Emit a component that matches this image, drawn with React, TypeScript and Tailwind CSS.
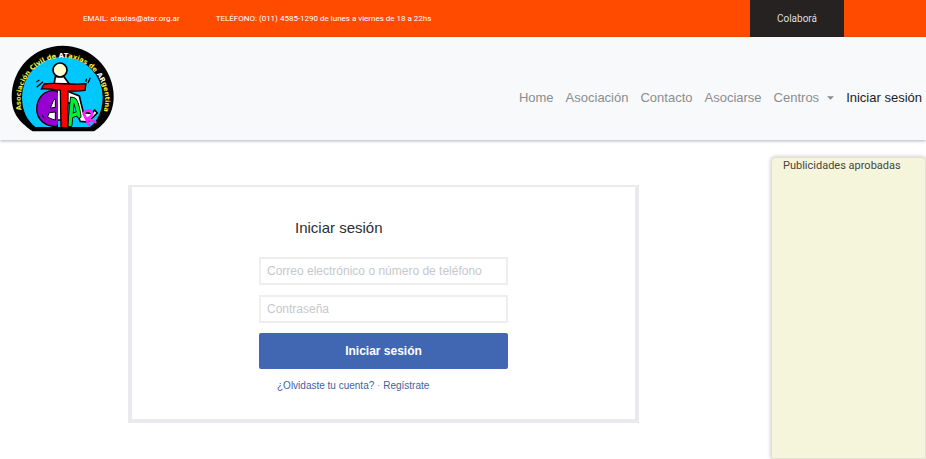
import React from "react";

const links = ["Home", "Asociación", "Contacto", "Asociarse"];

function Logo() {
  return (
    <svg
      viewBox="33 27 312 261"
      className="h-[87px] w-[104px]"
      role="img"
      aria-label="Asociación Civil de Ataxias de Argentina"
    >
      <defs>
        <path id="rim" d="M65 222 A127 127 0 1 1 312 222" />
      </defs>
      <path
        d="M98 286 C66 262 35 240 35 182 A153 153 0 0 1 341 182 C341 240 308 268 282 286 Z"
        fill="#000"
      />
      <path
        d="M106 273 C82 254 66 226 66 184 A121 121 0 0 1 308 184 C308 226 290 258 270 273 Z"
        fill="#00c8ff"
      />
      <text
        fill="#f8f03a"
        fontFamily="'DejaVu Sans', sans-serif"
        fontWeight="700"
        fontSize="20"
      >
        <textPath href="#rim">
          Asociación Civil de <tspan fill="#fff">AT</tspan>axias de{" "}
          <tspan fill="#fff">AR</tspan>gentina
        </textPath>
      </text>
      <path
        d="M109 138 l9 -6 M110 154 l19 -17 M257 137 l3 -9 M264 141 l7 -16"
        stroke="#000"
        strokeWidth="4"
        fill="none"
      />
      <g stroke="#000" strokeWidth="5" strokeLinejoin="round">
        <path
          d="M166 122 L192 122 L206 142 L208 168 L238 180 L250 230 L276 232 L284 222 L292 231 L264 258 L240 256 L226 206 L202 200 L202 252 L160 252 L158 170 Z"
          fill="#fff"
        />
        <ellipse cx="180" cy="102" rx="21" ry="21" fill="#ffffd2" />
      </g>
      <path
        d="M172 165 C130 158 110 190 110 220 C111 252 136 272 172 272 L172 226 L147 229 L142 250 L128 240 C136 212 146 190 172 180 Z"
        fill="#9600d2"
        stroke="#000"
        strokeWidth="4"
        strokeLinejoin="round"
      />
      <path
        d="M172 170 C142 164 124 190 123 220 C124 242 144 262 174 266 L174 172 Z"
        fill="#9600d2"
      />
      <path
        d="M151 216 L162 190 L166 190 L166 214 Z M148 230 L166 228 L166 252 C156 250 147 246 143 242 Z"
        fill="#fff"
        stroke="#000"
        strokeWidth="3"
      />
      <path
        d="M210 266 L217 190 C228 190 232 212 237 240 M213 240 L234 232"
        fill="none"
        stroke="#000"
        strokeWidth="15"
        strokeLinecap="round"
      />
      <path
        d="M210 266 L217 190 C228 190 232 212 237 240 M213 240 L234 232"
        fill="none"
        stroke="#00f032"
        strokeWidth="10"
        strokeLinecap="round"
      />
      <path
        d="M132 144 C168 138 216 148 258 143 L255 163 C234 167 218 165 204 165 L203 275 L183 275 L181 163 C164 161 150 158 124 159 Z"
        fill="#fa0000"
        stroke="#000"
        strokeWidth="4"
      />
      <path
        d="M268 268 L251 234 C252 222 275 220 276 233 C276 242 266 246 260 248 L286 258"
        fill="none"
        stroke="#ff1eff"
        strokeWidth="8"
        strokeLinecap="round"
        strokeLinejoin="round"
      />
    </svg>
  );
}

const field =
  "block h-7 w-full border-2 border-[#eeeeef] bg-white px-1.5 text-xs text-[#1d2129] placeholder:text-[#c6c8cc] outline-none";

export default function App() {
  return (
    <div className="flex min-h-screen flex-col bg-white font-['Liberation_Sans',Arial,sans-serif]">
      <div className="flex h-[37px] items-center bg-[#ff4b00] pl-[83px] font-[Roboto,sans-serif] text-[8px] text-white">
        <span>EMAIL: ataxias@atar.org.ar</span>
        <span className="ml-9">
          TELÉFONO: (011) 4585-1290 de lunes a viernes de 18 a 22hs
        </span>
        <button
          type="button"
          className="mr-[82px] ml-auto h-full w-[94px] bg-[#272222] text-[10px] text-[#dedede]"
        >
          Colaborá
        </button>
      </div>

      <header className="relative flex h-[103px] items-center justify-between bg-[#f8f9fb] pr-1 pl-[11px] shadow-[0_1px_3px_rgba(0,0,0,0.3)]">
        <a href="#inicio">
          <Logo />
        </a>
        <nav className="mt-[18px] flex items-center gap-3 text-[13px] leading-5 text-[#8c8d8e]">
          {links.map((label) => (
            <a key={label} href={"#" + label.toLowerCase()}>
              {label}
            </a>
          ))}
          <button type="button" className="flex items-center gap-2">
            Centros
            <svg viewBox="0 0 8 4" className="h-1 w-[7px]" aria-hidden="true">
              <path d="M0 0H8L4 4Z" fill="currentColor" />
            </svg>
          </button>
          <a href="#sesion" className="text-[#1b1c1d]">
            Iniciar sesión
          </a>
        </nav>
      </header>

      <div className="flex flex-1 pt-[17px]">
        <main className="flex-1 pt-7 pr-8 pl-32">
          <form
            className="w-full max-w-[511px] border-4 border-t-2 border-[#e9e9ee] bg-white px-[127px] pt-[31px] pb-[25px]"
            onSubmit={(e) => e.preventDefault()}
          >
            <h1 className="ml-9 text-[15px] leading-5 text-[#2c2e33]">
              Iniciar sesión
            </h1>
            <div className="mt-[19px] flex flex-col gap-2.5">
              <input
                type="text"
                aria-label="Correo electrónico o número de teléfono"
                placeholder="Correo electrónico o número de teléfono"
                className={field}
              />
              <input
                type="password"
                aria-label="Contraseña"
                placeholder="Contraseña"
                className={field}
              />
              <button
                type="submit"
                className="h-9 w-full rounded-xs bg-[#4267b2] text-xs font-bold text-white"
              >
                Iniciar sesión
              </button>
            </div>
            <p className="mt-[9px] ml-[18px] text-[10px] leading-4 text-[#4661a0]">
              <a href="#recuperar">¿Olvidaste tu cuenta?</a>
              <span className="text-[#a0a4ac]"> · </span>
              <a href="#registro">Regístrate</a>
            </p>
          </form>
        </main>
        <aside className="w-[155px] shrink-0 rounded-t-sm border border-[#e2e2cf] bg-[#f5f5dc] pl-[11px] font-[Roboto,sans-serif] shadow-[0_0_4px_rgba(0,0,0,0.25)]">
          <h2 className="text-[11px] leading-4 text-[#444540]">
            Publicidades aprobadas
          </h2>
        </aside>
      </div>
    </div>
  );
}
